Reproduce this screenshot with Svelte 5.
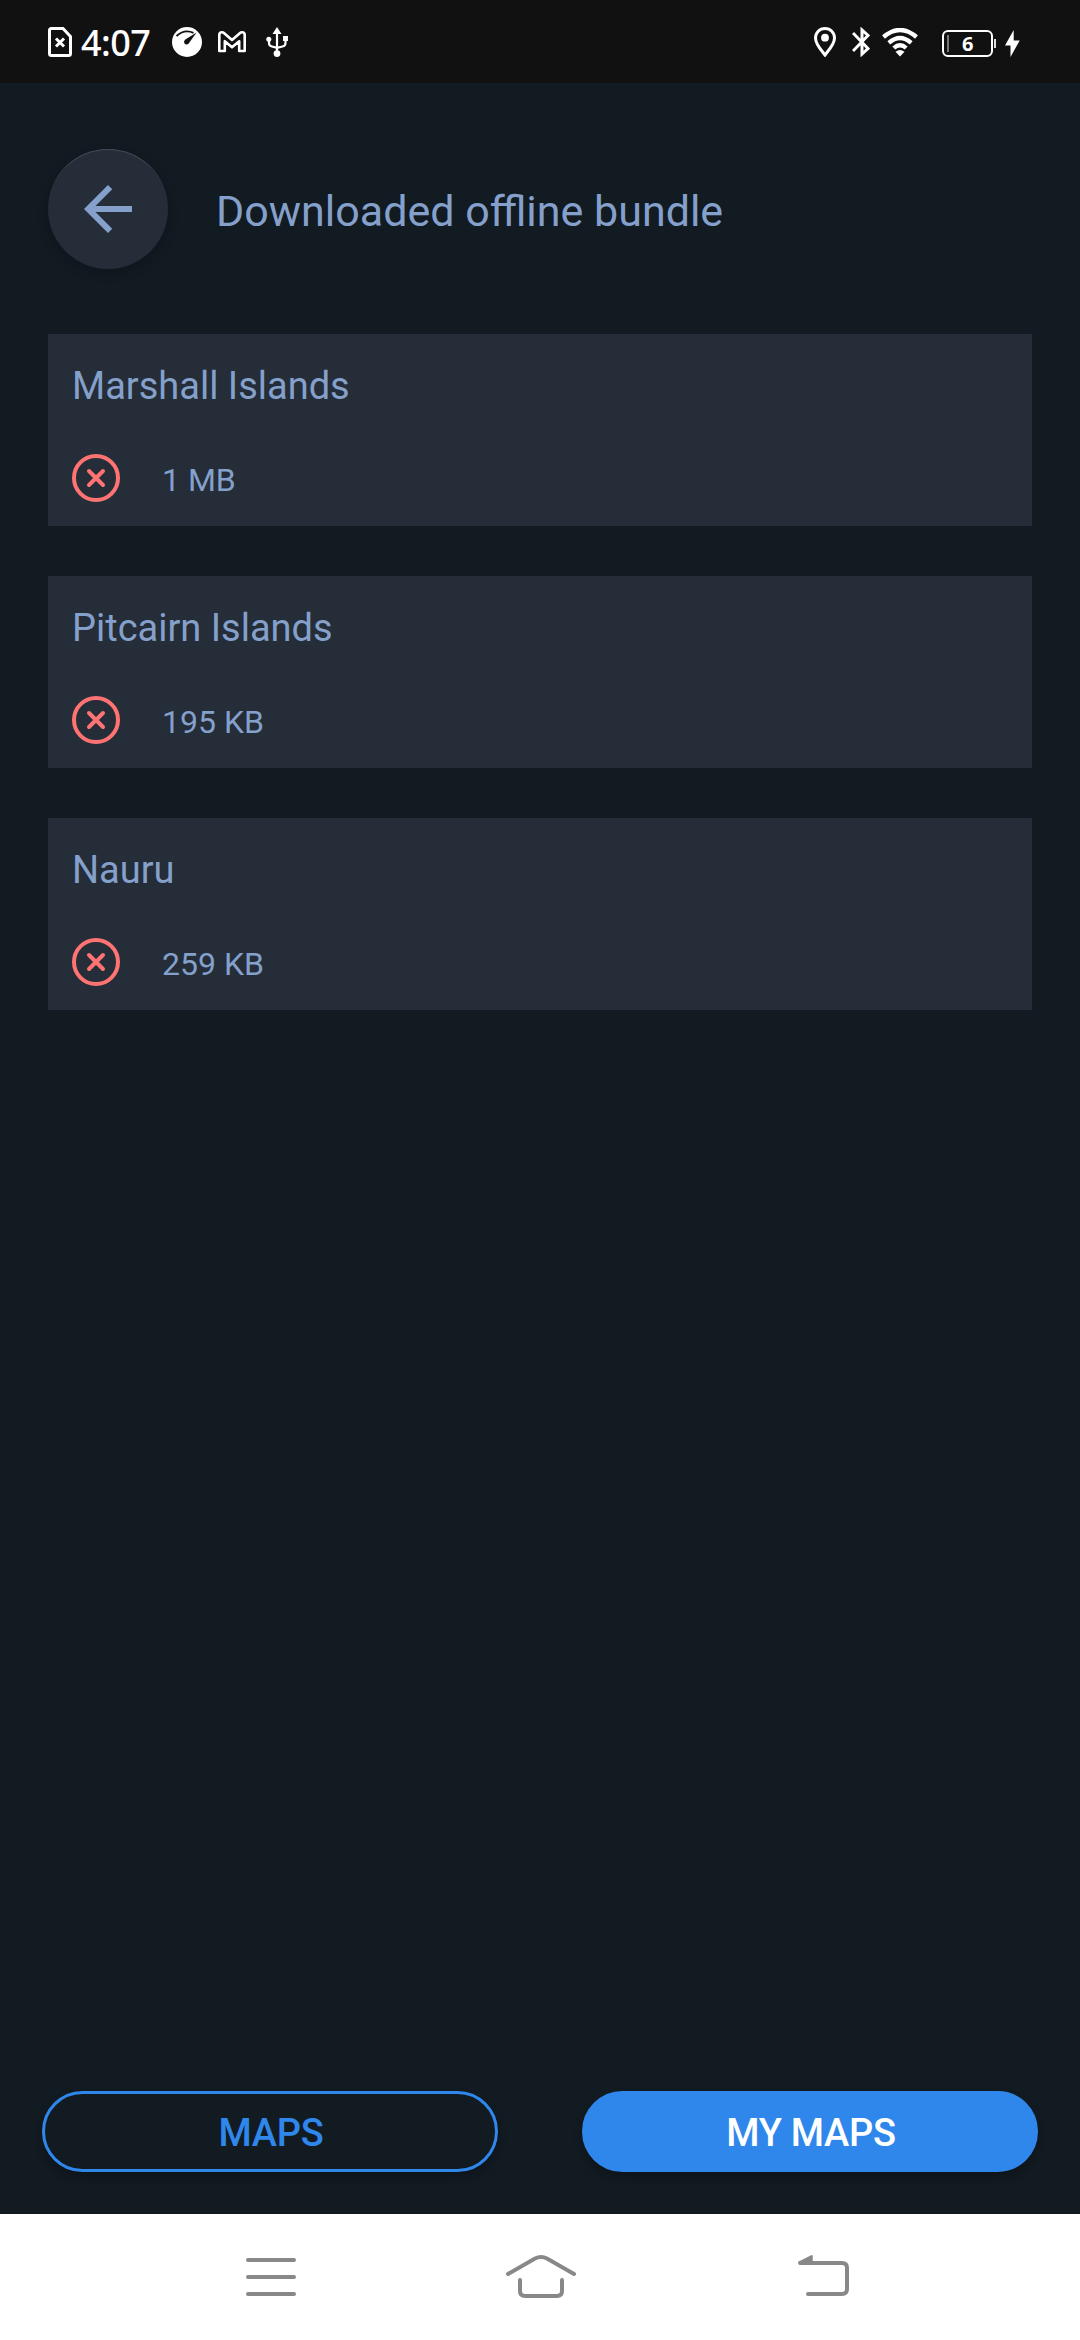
<script>
  const bundles = [
    { name: 'Marshall Islands', size: '1 MB' },
    { name: 'Pitcairn Islands', size: '195 KB' },
    { name: 'Nauru', size: '259 KB' }
  ];
</script>

<div class="screen">
  <div class="status">
    <div class="left">
      <svg class="sim" width="24" height="30" viewBox="0 0 24 30" fill="none" stroke="#fff">
        <path d="M3.5 1.5H15L22.5 9.5V26.5Q22.5 28.5 20.5 28.5H3.5Q1.5 28.5 1.5 26.5V3.5Q1.5 1.5 3.5 1.5Z" stroke-width="3" />
        <path d="M8 11.5L16 19.5M16 11.5L8 19.5" stroke-width="3" />
      </svg>
      <span class="time">4:07</span>
      <svg class="gauge" width="30" height="30" viewBox="0 0 30 30">
        <circle cx="15" cy="15" r="15" fill="#fff" />
        <path d="M4.5 9Q12.500 1.800 21.500 5.900" stroke="#111" stroke-width="1.8" fill="none" />
        <path d="M24.500 5.500L13 12.700Q11.300 14.500 12.500 16.400Q14.500 18.600 16.700 16.500Z" fill="#111" />
      </svg>
      <svg class="mail" width="28" height="22" viewBox="0 0 28 22" fill="none" stroke="#fff" stroke-width="2.600" stroke-linejoin="round">
        <path d="M1.300 4Q1.300 1.300 4 1.300Q5.200 1.300 6.200 2.200L14 9L21.800 2.200Q22.800 1.300 24 1.300Q26.700 1.300 26.700 4V20H21.200V10.200L14 16.200L6.800 10.200V20H1.300Z" />
      </svg>
      <svg class="usb" width="22" height="30" viewBox="0 0 22 30" fill="none" stroke="#fff" stroke-width="2.200">
        <path d="M11 26V5M3 13V16Q3 19 6 19.500L11 20.800L16.500 19.500Q19.500 19 19.500 16V12" />
        <path d="M11 0L15.500 7H6.500Z" fill="#fff" stroke="none" />
        <circle cx="11" cy="26.600" r="3.400" fill="#fff" stroke="none" />
        <circle cx="2.800" cy="12.300" r="2.500" fill="#fff" stroke="none" />
        <path d="M17 9H22V14H17Z" fill="#fff" stroke="none" />
      </svg>
    </div>
    <div class="right">
      <svg class="pin" width="22" height="30" viewBox="0 0 22 30">
        <path d="M11 1.500C5.600 1.500 1.500 5.600 1.500 11C1.500 17.500 8 24 11 28C14 24 20.500 17.500 20.500 11C20.500 5.600 16.400 1.500 11 1.500Z" fill="none" stroke="#fff" stroke-width="3" />
        <circle cx="11" cy="10.700" r="3.900" fill="#fff" />
      </svg>
      <svg class="bt" width="18" height="30" viewBox="0 0 18 30" fill="none" stroke="#fff" stroke-width="3">
        <path d="M1 6L16 21.500L10 27V3L16 8.500L1 24" />
      </svg>
      <svg class="wifi" width="36" height="29" viewBox="0 0 36 29" fill="none" stroke="#fff" stroke-width="4.300">
        <path d="M1.500 9Q18 -5 34.500 9" />
        <path d="M6.800 14.800Q18 5 29.200 14.800" />
        <path d="M11.800 20Q18 14.500 24.200 20" />
        <path d="M13.500 23.700Q18 20.500 22.500 23.700L18 28.500Z" fill="#fff" stroke="none" />
      </svg>
      <div class="battery"><span>6</span></div>
      <i class="nub"></i>
      <svg class="bolt" width="15" height="27" viewBox="0 0 15 27"><path d="M8.700 0L0 15.500H5.500V27L14.700 10.500H8.700Z" fill="#fff" /></svg>
    </div>
  </div>

  <header>
    <button class="back" aria-label="Back">
      <svg width="72" height="72" viewBox="0 0 24 24"><path d="M20 11H7.830l5.590-5.590L12 4l-8 8 8 8 1.410-1.410L7.830 13H20z" fill="#84a0cb" /></svg>
    </button>
    <h1>Downloaded offline bundle</h1>
  </header>

  <main>
    {#each bundles as bundle}
      <section class="card">
        <h2>{bundle.name}</h2>
        <div class="row">
          <svg width="48" height="48" viewBox="0 0 48 48" fill="none" stroke="#ff7373" stroke-width="4" stroke-linecap="round">
            <circle cx="24" cy="24" r="22" />
            <path d="M17 17L31 31M31 17L17 31" />
          </svg>
          <span>{bundle.size}</span>
        </div>
      </section>
    {/each}
  </main>

  <div class="tabs">
    <button class="outline">MAPS</button>
    <button class="filled">MY MAPS</button>
  </div>

  <nav>
    <svg class="menu" width="50" height="38" viewBox="0 0 50 38" stroke="#888" stroke-width="4" stroke-linecap="round"><path d="M2 2H48M2 19H48M2 36H48" /></svg>
    <svg class="home" width="70" height="43" viewBox="0 0 70 43" fill="none" stroke="#888" stroke-width="4" stroke-linecap="round">
      <path d="M2 19L29 3.500Q35 .7 41 3.500L68 19" />
      <path d="M14 25V36Q14 41 19 41H51Q56 41 56 36V25" />
    </svg>
    <svg width="51" height="41" viewBox="0 0 51 41" fill="none" stroke="#888" stroke-width="4" stroke-linecap="round">
      <path d="M2 8H44Q49 8 49 13V34Q49 39 44 39H10" />
      <path d="M1.500 7L13.500 .8L14 1V8H2Z" fill="#888" stroke-width="1.500" stroke-linejoin="round" />
    </svg>
  </nav>
</div>

<style>
  :global(body) { margin: 0; background: #121a22; }
  .screen {
    width: 1080px;
    height: 2340px;
    display: flex;
    flex-direction: column;
    background: #121a22;
    color: #84a0cb;
    font-family: Roboto, sans-serif;
    overflow: hidden;
  }
  svg { display: block; flex: none; }
  button { font-family: inherit; padding: 0; margin: 0; box-sizing: border-box; }
  .status {
    height: 83px;
    flex: none;
    background: #111;
    color: #fff;
    display: flex;
    justify-content: space-between;
    align-items: flex-start;
    padding: 0 60px 0 48px;
    box-sizing: border-box;
  }
  .left, .right { display: flex; align-items: flex-start; padding-top: 27px; }
  .time {
    width: 76px;
    margin: -9px 0 0 9px;
    font: 500 36px/50px "Noto Sans", sans-serif;
    letter-spacing: -.6px;
    white-space: nowrap;
  }
  .gauge { margin-left: 15px; }
  .mail { margin: 4px 0 0 16px; }
  .usb { margin-left: 20px; }
  .bt { margin-left: 16px; }
  .wifi { margin: 1px 0 0 12px; }
  .battery {
    width: 51px;
    height: 27px;
    margin: 3px 0 0 24px;
    border: 2px solid #fff;
    border-radius: 6px;
    box-sizing: border-box;
    display: flex;
    align-items: center;
    padding-left: 3px;
    font: 700 20px/23px "Noto Sans", sans-serif;
  }
  .battery::before { content: ''; width: 2px; height: 17px; background: #777; }
  .battery span { margin-left: 13px; }
  .nub { width: 2px; height: 9px; margin: 12px 0 0 1px; background: #ddd; }
  .bolt { margin: 3px 0 0 9px; }
  header { display: flex; align-items: center; padding: 66px 48px 65px; }
  .back {
    width: 120px;
    height: 120px;
    border: 0;
    border-radius: 50%;
    background: #242d38;
    display: flex;
    align-items: center;
    justify-content: center;
    box-shadow: inset 0 2px 1px -1px #454c56, 0 4px 12px rgba(0, 0, 0, .2);
  }
  h1 { margin: 4px 0 0 48px; font-size: 43px; line-height: 52px; font-weight: 400; white-space: nowrap; }
  main { display: flex; flex-direction: column; gap: 50px; padding: 0 48px; flex: 1; }
  .card { height: 192px; padding: 24px; box-sizing: border-box; background: #242d38; }
  h2 { margin: 5px 0 0; height: 91px; font-size: 38px; line-height: 46px; font-weight: 400; }
  .row { display: flex; align-items: center; gap: 42px; font-size: 32px; line-height: 38px; }
  .row span { padding-top: 3px; }
  .tabs { display: flex; gap: 84px; padding: 0 42px 42px; }
  .tabs button {
    flex: 1;
    height: 81px;
    padding: 2px 0 0 2px;
    border: 3px solid #2f87eb;
    border-radius: 41px;
    font-size: 38px;
    font-weight: 500;
    line-height: 46px;
    letter-spacing: -.3px;
    box-shadow: 0 5px 9px rgba(0, 0, 0, .25);
  }
  .outline { background: #121a22; color: #2f87eb; }
  .filled { background: #2f87eb; color: #fff; }
  nav {
    height: 126px;
    flex: none;
    background: #fff;
    display: flex;
    align-items: flex-start;
    justify-content: space-between;
    padding: 41px 231px 0 246px;
    box-sizing: border-box;
  }
  .menu { margin-top: 3px; }
  .home { margin-right: 12px; }
</style>
